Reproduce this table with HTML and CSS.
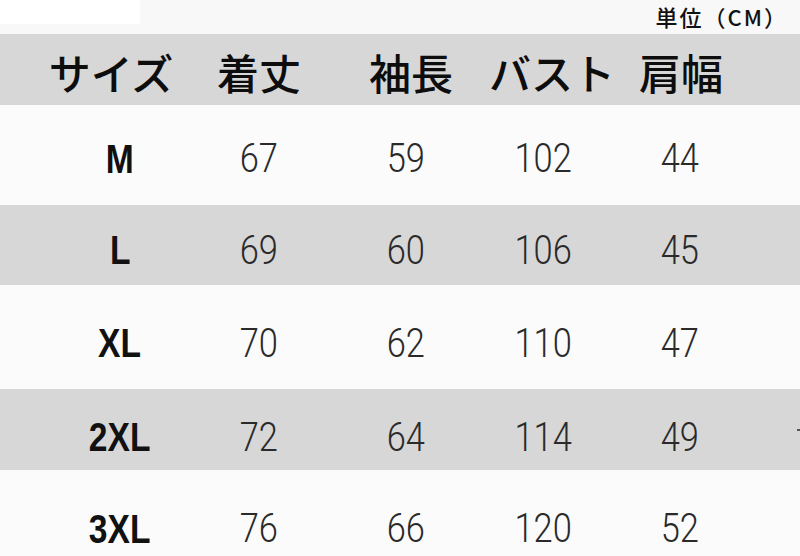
FILE: index.html
```html
<!DOCTYPE html>
<html lang="ja">
<head>
<meta charset="utf-8">
<title>サイズ表</title>
<link rel="stylesheet" href="styles.css">
</head>
<body>
<div class="chart">
  <div class="top">
    <div class="blank"></div>
    <div class="unit">単位（CM）</div>
  </div>
  <div class="head">
    <div class="h">サイズ</div>
    <div class="h">着丈</div>
    <div class="h">袖長</div>
    <div class="h">バスト</div>
    <div class="h">肩幅</div>
  </div>
  <div class="row r-m">
    <div class="c size"><span>M</span></div>
    <div class="c"><span>67</span></div>
    <div class="c"><span>59</span></div>
    <div class="c"><span>102</span></div>
    <div class="c"><span>44</span></div>
  </div>
  <div class="row r-l gray">
    <div class="c size"><span>L</span></div>
    <div class="c"><span>69</span></div>
    <div class="c"><span>60</span></div>
    <div class="c"><span>106</span></div>
    <div class="c"><span>45</span></div>
  </div>
  <div class="row r-xl">
    <div class="c size"><span>XL</span></div>
    <div class="c"><span>70</span></div>
    <div class="c"><span>62</span></div>
    <div class="c"><span>110</span></div>
    <div class="c"><span>47</span></div>
  </div>
  <div class="row r-2xl gray">
    <div class="c size"><span>2XL</span></div>
    <div class="c"><span>72</span></div>
    <div class="c"><span>64</span></div>
    <div class="c"><span>114</span></div>
    <div class="c"><span>49</span></div>
    <div class="tick"></div>
  </div>
  <div class="row r-3xl">
    <div class="c size"><span>3XL</span></div>
    <div class="c"><span>76</span></div>
    <div class="c"><span>66</span></div>
    <div class="c"><span>120</span></div>
    <div class="c"><span>52</span></div>
  </div>
</div>
</body>
</html>
```

FILE: styles.css
```css
html, body {
  margin: 0;
  padding: 0;
  background: #fafafa;
}

.chart {
  width: 800px;
  height: 556px;
  overflow: hidden;
  display: flex;
  flex-direction: column;
  background: #fafafa;
}

.top {
  height: 34px;
  flex: none;
  display: flex;
  justify-content: space-between;
  align-items: flex-start;
  background: #f8f8f8;
}

.blank {
  width: 140px;
  height: 24px;
  background: #ffffff;
}

.unit {
  font-family: "Noto Sans CJK JP", sans-serif;
  font-weight: 500;
  font-size: 22px;
  line-height: normal;
  color: #111;
  letter-spacing: 2px;
  padding-right: 12px;
  white-space: nowrap;
}

.head {
  height: 71px;
  flex: none;
  background: #d7d7d7;
  display: grid;
  grid-template-columns: 140px 156px 148px 134px 124px;
  padding-left: 41px;
  align-items: center;
  box-sizing: border-box;
  padding-top: 4px;
}

.h {
  text-align: center;
  white-space: nowrap;
  font-family: "Noto Sans CJK JP", sans-serif;
  font-weight: 500;
  font-size: 42px;
  line-height: 1;
  color: #0d0d0d;
}

.row {
  display: grid;
  flex: none;
  grid-template-columns: 120px 158px 136px 138px 136px;
  padding-left: 60px;
  align-items: center;
  box-sizing: border-box;
  background: #fbfbfb;
  position: relative;
}

.gray {
  background: #d7d7d7;
}

.r-m { height: 100px; padding-top: 7px; }
.r-l { height: 80px; padding-top: 10px; }
.r-xl { height: 104px; padding-top: 12px; }
.r-2xl { height: 81px; padding-top: 15px; }
.r-3xl { height: 86px; padding-top: 31px; }

.c {
  text-align: center;
  font-family: "Roboto", "Liberation Sans", sans-serif;
  font-weight: 300;
  font-size: 41px;
  line-height: 1;
  color: #2a2a2a;
}

.c span {
  display: inline-block;
  transform: scaleX(0.84);
}

.size {
  font-family: "Liberation Sans", Arial, sans-serif;
  font-weight: 700;
  font-size: 40px;
  color: #111;
}

.tick {
  position: absolute;
  right: 0;
  top: 40px;
  width: 3px;
  height: 2px;
  background: #555;
}
```
